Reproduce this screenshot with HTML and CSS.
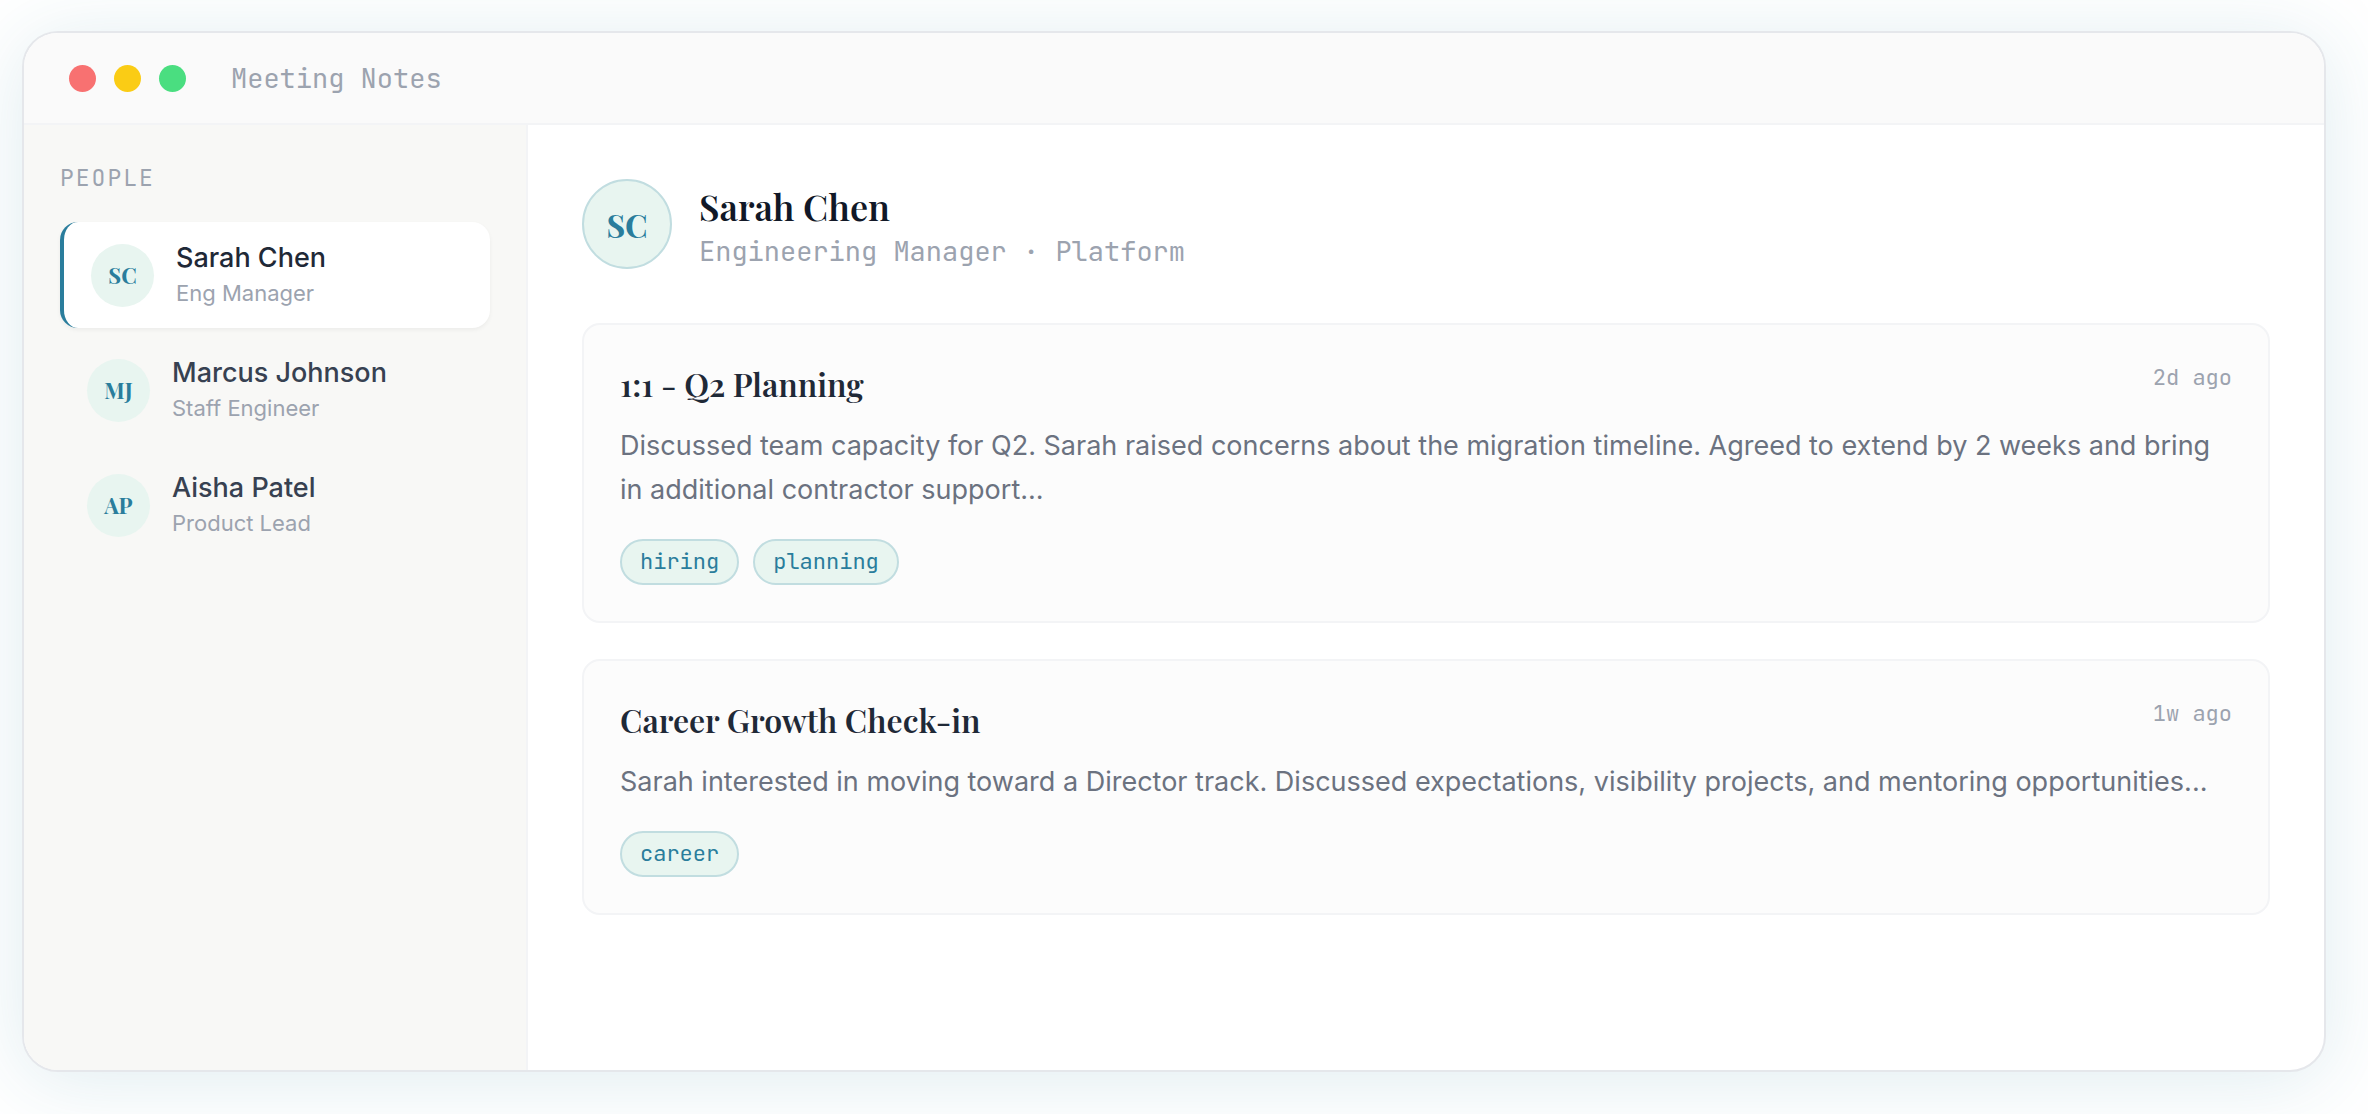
FILE: index.html
```html
<!DOCTYPE html>
<html lang="en">
<head>
    <meta charset="UTF-8">
    <meta name="viewport" content="width=device-width, initial-scale=1.0">
    <title>Meeting Notes</title>
    <link rel="stylesheet" href="styles.css">
</head>
<body>

<div class="window">
    <header class="titlebar">
        <span class="dot dot-red"></span>
        <span class="dot dot-yellow"></span>
        <span class="dot dot-green"></span>
        <span class="window-title">Meeting Notes</span>
    </header>

    <div class="layout">
        <nav class="sidebar" aria-labelledby="peopleLabel">
            <div class="sidebar-label" id="peopleLabel">PEOPLE</div>
            <div class="people">
                <button type="button" class="person active">
                    <span class="avatar">SC</span>
                    <span class="person-info">
                        <span class="person-name">Sarah Chen</span>
                        <span class="person-role">Eng Manager</span>
                    </span>
                </button>
                <button type="button" class="person">
                    <span class="avatar">MJ</span>
                    <span class="person-info">
                        <span class="person-name">Marcus Johnson</span>
                        <span class="person-role">Staff Engineer</span>
                    </span>
                </button>
                <button type="button" class="person">
                    <span class="avatar">AP</span>
                    <span class="person-info">
                        <span class="person-name">Aisha Patel</span>
                        <span class="person-role">Product Lead</span>
                    </span>
                </button>
            </div>
        </nav>

        <main class="content">
            <div class="profile">
                <span class="avatar avatar-large">SC</span>
                <div>
                    <h1 class="profile-name">Sarah Chen</h1>
                    <p class="profile-role">Engineering Manager · Platform</p>
                </div>
            </div>

            <div class="notes">
                <article class="note">
                    <div class="note-header">
                        <h2 class="note-title">1:1 - Q2 Planning</h2>
                        <time class="note-date">2d ago</time>
                    </div>
                    <p class="note-text">Discussed team capacity for Q2. Sarah raised concerns about the migration timeline. Agreed to extend by 2 weeks and bring in additional contractor support...</p>
                    <div class="tags">
                        <span class="tag">hiring</span>
                        <span class="tag">planning</span>
                    </div>
                </article>

                <article class="note">
                    <div class="note-header">
                        <h2 class="note-title">Career Growth Check-in</h2>
                        <time class="note-date">1w ago</time>
                    </div>
                    <p class="note-text">Sarah interested in moving toward a Director track. Discussed expectations, visibility projects, and mentoring opportunities...</p>
                    <div class="tags">
                        <span class="tag">career</span>
                    </div>
                </article>
            </div>
        </main>
    </div>
</div>

</body>
</html>
```
FILE: styles.css
```css
:root {
    --sans: Inter, "Liberation Sans", sans-serif;
    --serif: "Playfair Display", "Liberation Serif", serif;
    --mono: "JetBrains Mono", "DejaVu Sans Mono", monospace;
    --accent: #2a7d9c;
    --accent-soft: #e8f5f0;
    --accent-border: #c1dde0;
    --muted: #9ca3af;
    --line: #f3f4f6;
}
* {
    box-sizing: border-box;
}
body {
    display: flex;
    min-height: 100vh;
    margin: 0;
    padding: 31px 42px 42px 22px;
    background: #fff;
    font-family: var(--sans);
}
h1, h2, p {
    margin: 0;
}

/* Window frame */
.window {
    display: flex;
    flex-direction: column;
    flex: 1;
    background: #fff;
    border: 2px solid #e5e7eb;
    border-radius: 36px;
    box-shadow: 0 8px 80px rgba(42, 125, 156, 0.15);
    overflow: hidden;
}
.titlebar {
    display: flex;
    align-items: center;
    gap: 18px;
    padding: 27px 45px;
    background: #fafafa;
    border-bottom: 2px solid var(--line);
}
.dot {
    width: 27px;
    height: 27px;
    border-radius: 50%;
}
.dot-red {
    background: #f87171;
}
.dot-yellow {
    background: #facc15;
}
.dot-green {
    background: #4ade80;
}
.window-title {
    margin-left: 27px;
    color: var(--muted);
    font-family: var(--mono);
    font-size: 27px;
    line-height: 36px;
}
.layout {
    display: flex;
    flex: 1;
}

/* Sidebar */
.sidebar {
    flex: none;
    width: 504px;
    padding: 36px;
    background: #f8f8f6;
    border-right: 2px solid var(--line);
}
.sidebar-label {
    margin-bottom: 27px;
    color: var(--muted);
    font-family: var(--mono);
    font-size: 23px;
    line-height: 34px;
    letter-spacing: 2px;
}
.people {
    display: flex;
    flex-direction: column;
    gap: 9px;
}
.person {
    display: flex;
    align-items: center;
    gap: 22px;
    padding: 18px 27px;
    background: none;
    border: none;
    border-radius: 18px;
    color: #374151;
    font-family: var(--sans);
    text-align: left;
    cursor: pointer;
}
.person.active {
    background: #fff;
    border-left: 4px solid var(--accent);
    box-shadow: 0 2px 4px rgba(0, 0, 0, 0.05);
    color: #1f2937;
}
.person-name,
.person-role {
    display: block;
}
.person-name {
    font-size: 27px;
    font-weight: 500;
    line-height: 36px;
}
.person-role {
    color: var(--muted);
    font-size: 22px;
    line-height: 34px;
}
.avatar {
    display: flex;
    flex: none;
    align-items: center;
    justify-content: center;
    width: 63px;
    height: 63px;
    background: var(--accent-soft);
    border-radius: 50%;
    color: var(--accent);
    font-family: var(--serif);
    font-size: 22px;
    font-weight: 700;
}
.avatar-large {
    width: 90px;
    height: 90px;
    border: 2px solid var(--accent-border);
    font-size: 32px;
}

/* Selected person */
.content {
    flex: 1;
    padding: 54px;
}
.profile {
    display: flex;
    align-items: center;
    gap: 27px;
    margin-bottom: 54px;
}
.profile-name {
    color: #111827;
    font-family: var(--serif);
    font-size: 36px;
    font-weight: 600;
    line-height: 54px;
}
.profile-role {
    color: var(--muted);
    font-family: var(--mono);
    font-size: 27px;
    line-height: 36px;
}

/* Notes */
.notes {
    display: flex;
    flex-direction: column;
    gap: 36px;
}
.note {
    padding: 36px;
    background: #fcfcfc;
    border: 2px solid var(--line);
    border-radius: 18px;
}
.note-header {
    display: flex;
    align-items: flex-start;
    justify-content: space-between;
    margin-bottom: 18px;
}
.note-title {
    color: #1f2937;
    font-family: var(--serif);
    font-size: 32px;
    font-weight: 600;
    line-height: 45px;
}
.note-date {
    color: var(--muted);
    font-family: var(--mono);
    font-size: 22px;
    line-height: 34px;
}
.note-text {
    margin-bottom: 27px;
    color: #6b7280;
    font-size: 27px;
    line-height: 44px;
}
.tags {
    display: flex;
    gap: 14px;
}
.tag {
    padding: 4px 18px;
    background: var(--accent-soft);
    border: 2px solid var(--accent-border);
    border-radius: 23px;
    color: var(--accent);
    font-family: var(--mono);
    font-size: 22px;
    line-height: 34px;
}
```
